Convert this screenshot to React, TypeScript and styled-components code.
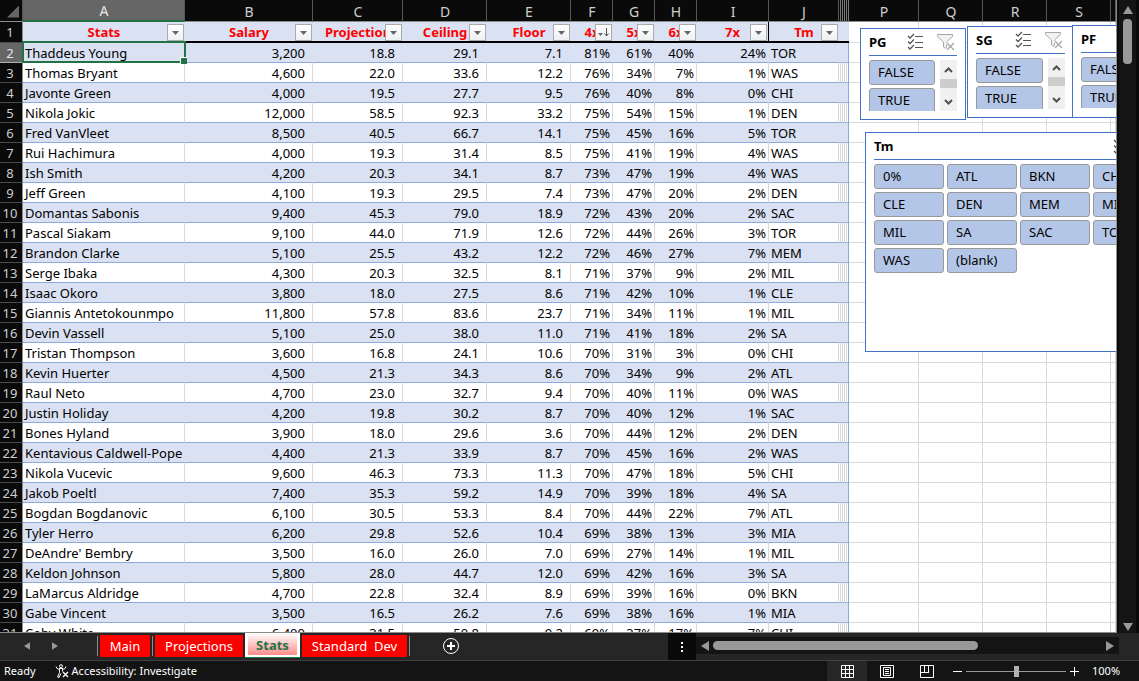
import React from "react";
import styled, { createGlobalStyle, css } from "styled-components";

const GlobalStyle = createGlobalStyle`
  * { box-sizing: border-box; }
  html, body { margin: 0; }
  body { background: #141414; font-family: "Noto Sans", "Open Sans", sans-serif; font-size: 13px; color: #000; }
  button { font: inherit; color: inherit; margin: 0; padding: 0; border: 0; background: none; }
`;

const blue = "#8ea9db";
const band = "#d9e1f2";
const gridLine = "#d9d9d9";
const slicerBlue = "#4472c4";

type Row = [string, string, string, string, string, string, string, string, string, string];

const rows: Row[] = [
  ["Thaddeus Young", "3,200", "18.8", "29.1", "7.1", "81%", "61%", "40%", "24%", "TOR"],
  ["Thomas Bryant", "4,600", "22.0", "33.6", "12.2", "76%", "34%", "7%", "1%", "WAS"],
  ["Javonte Green", "4,000", "19.5", "27.7", "9.5", "76%", "40%", "8%", "0%", "CHI"],
  ["Nikola Jokic", "12,000", "58.5", "92.3", "33.2", "75%", "54%", "15%", "1%", "DEN"],
  ["Fred VanVleet", "8,500", "40.5", "66.7", "14.1", "75%", "45%", "16%", "5%", "TOR"],
  ["Rui Hachimura", "4,000", "19.3", "31.4", "8.5", "75%", "41%", "19%", "4%", "WAS"],
  ["Ish Smith", "4,200", "20.3", "34.1", "8.7", "73%", "47%", "19%", "4%", "WAS"],
  ["Jeff Green", "4,100", "19.3", "29.5", "7.4", "73%", "47%", "20%", "2%", "DEN"],
  ["Domantas Sabonis", "9,400", "45.3", "79.0", "18.9", "72%", "43%", "20%", "2%", "SAC"],
  ["Pascal Siakam", "9,100", "44.0", "71.9", "12.6", "72%", "44%", "26%", "3%", "TOR"],
  ["Brandon Clarke", "5,100", "25.5", "43.2", "12.2", "72%", "46%", "27%", "7%", "MEM"],
  ["Serge Ibaka", "4,300", "20.3", "32.5", "8.1", "71%", "37%", "9%", "2%", "MIL"],
  ["Isaac Okoro", "3,800", "18.0", "27.5", "8.6", "71%", "42%", "10%", "1%", "CLE"],
  ["Giannis Antetokounmpo", "11,800", "57.8", "83.6", "23.7", "71%", "34%", "11%", "1%", "MIL"],
  ["Devin Vassell", "5,100", "25.0", "38.0", "11.0", "71%", "41%", "18%", "2%", "SA"],
  ["Tristan Thompson", "3,600", "16.8", "24.1", "10.6", "70%", "31%", "3%", "0%", "CHI"],
  ["Kevin Huerter", "4,500", "21.3", "34.3", "8.6", "70%", "34%", "9%", "2%", "ATL"],
  ["Raul Neto", "4,700", "23.0", "32.7", "9.4", "70%", "40%", "11%", "0%", "WAS"],
  ["Justin Holiday", "4,200", "19.8", "30.2", "8.7", "70%", "40%", "12%", "1%", "SAC"],
  ["Bones Hyland", "3,900", "18.0", "29.6", "3.6", "70%", "44%", "12%", "2%", "DEN"],
  ["Kentavious Caldwell-Pope", "4,400", "21.3", "33.9", "8.7", "70%", "45%", "16%", "2%", "WAS"],
  ["Nikola Vucevic", "9,600", "46.3", "73.3", "11.3", "70%", "47%", "18%", "5%", "CHI"],
  ["Jakob Poeltl", "7,400", "35.3", "59.2", "14.9", "70%", "39%", "18%", "4%", "SA"],
  ["Bogdan Bogdanovic", "6,100", "30.5", "53.3", "8.4", "70%", "44%", "22%", "7%", "ATL"],
  ["Tyler Herro", "6,200", "29.8", "52.6", "10.4", "69%", "38%", "13%", "3%", "MIA"],
  ["DeAndre' Bembry", "3,500", "16.0", "26.0", "7.0", "69%", "27%", "14%", "1%", "MIL"],
  ["Keldon Johnson", "5,800", "28.0", "44.7", "12.0", "69%", "42%", "16%", "3%", "SA"],
  ["LaMarcus Aldridge", "4,700", "22.8", "32.4", "8.9", "69%", "39%", "16%", "0%", "BKN"],
  ["Gabe Vincent", "3,500", "16.5", "26.2", "7.6", "69%", "38%", "16%", "1%", "MIA"],
  ["Coby White", "6,400", "31.5", "50.8", "9.2", "69%", "37%", "17%", "7%", "CHI"],
];

const columns = [
  { letter: "A", label: "Stats", width: 162 },
  { letter: "B", label: "Salary", width: 128 },
  { letter: "C", label: "Projection", width: 90 },
  { letter: "D", label: "Ceiling", width: 84 },
  { letter: "E", label: "Floor", width: 84 },
  { letter: "F", label: "4x", width: 42 },
  { letter: "G", label: "5x", width: 42 },
  { letter: "H", label: "6x", width: 42 },
  { letter: "I", label: "7x", width: 72 },
  { letter: "J", label: "Tm", width: 70 },
];

const emptyColumns = [
  { letter: "P", width: 70 },
  { letter: "Q", width: 64 },
  { letter: "R", width: 64 },
  { letter: "S", width: 64 },
];

const Window = styled.div`
  display: flex;
  flex-direction: column;
  height: 100vh;
  overflow: hidden;
  background: #262626;
`;

const Workspace = styled.main`
  display: flex;
  flex: 1;
  min-height: 0;
`;

const SheetArea = styled.div`
  position: relative;
  flex: 1;
  min-width: 0;
  overflow: hidden;
  background: #fff;
  border-right: 1px solid #8c8c8c;
  border-bottom: 1px solid #8c8c8c;
`;

const Sheet = styled.table`
  table-layout: fixed;
  width: 100%;
  min-width: 1100px;
  border-collapse: separate;
  border-spacing: 0;
  line-height: 18px;
`;

const Col = styled.col<{ $width?: number }>`
  ${(p) => p.$width && css`width: ${p.$width}px;`}
`;

const ColumnHead = styled.th<{ $selected?: boolean; $narrow?: boolean }>`
  height: 22px;
  padding: ${(p) => (p.$narrow ? "2px 0 0" : "2px 0 0 1px")};
  overflow: hidden;
  font-weight: 400;
  font-size: 14px;
  color: ${(p) => (p.$selected ? "#e6e6e6" : "#cfcfcf")};
  background: ${(p) => (p.$selected ? "#666" : "#0a0a0a")};
  border-right: 1px solid ${(p) => (p.$narrow ? "#777" : "#555")};
  border-bottom: ${(p) => (p.$selected ? "2px solid #217346" : "1px solid #8c8c8c")};
`;

const SelectAll = styled.button`
  display: block;
  width: 12px;
  height: 12px;
  margin-left: 6px;
  background: #666;
  clip-path: polygon(100% 0, 100% 100%, 0 100%);
`;

const RowHead = styled.th<{ $selected?: boolean }>`
  padding: 0 2px 0 0;
  font-weight: 400;
  text-align: center;
  color: ${(p) => (p.$selected ? "#e6e6e6" : "#cfcfcf")};
  background: ${(p) => (p.$selected ? "#666" : "#0a0a0a")};
  border-right: 1px solid #8c8c8c;
  border-bottom: 1px solid ${(p) => (p.$selected ? "#b0b0b0" : "#4a4a4a")};
`;

const FieldHead = styled.th<{ $divider?: boolean }>`
  height: 21px;
  padding: 0;
  background: ${band};
  border-bottom: 2px solid #000;
  ${(p) => p.$divider && css`border-right: 1px solid #000;`}
`;

const FieldInner = styled.div`
  display: grid;
  position: relative;
  align-items: center;
  height: 19px;
  font-weight: 700;
  color: #f00;
  overflow: hidden;
  white-space: nowrap;
  text-align: center;
`;

const FilterButton = styled.button`
  position: absolute;
  right: 1px;
  top: 2px;
  display: grid;
  place-items: center;
  width: 17px;
  height: 17px;
  border: 1px solid #ababab;
  background: linear-gradient(#fff, #eef0f4);
`;

const Cell = styled.td<{ $band?: boolean; $text?: boolean; $pad?: number }>`
  height: 20px;
  padding: 0 ${(p) => p.$pad ?? 2}px 0 2px;
  overflow: hidden;
  white-space: nowrap;
  text-align: ${(p) => (p.$text ? "left" : "right")};
  background: ${(p) => (p.$band ? band : "#fff")};
  border-right: 1px solid ${(p) => (p.$band ? band : gridLine)};
  border-bottom: 1px solid ${blue};
`;

const SliverCell = styled(Cell)<{ $last?: boolean }>`
  padding: 0;
  ${(p) => p.$last && css`border-right-color: ${blue};`}
`;

const BlankCell = styled.td`
  padding: 0;
  border-right: 1px solid ${gridLine};
  border-bottom: 1px solid ${gridLine};
`;

const Selection = styled.div`
  position: absolute;
  left: 22px;
  top: 41px;
  width: 164px;
  height: 22px;
  border: 2px solid #217346;
  pointer-events: none;
  &::after {
    content: "";
    position: absolute;
    right: -3px;
    bottom: -3px;
    width: 6px;
    height: 6px;
    background: #217346;
    border-left: 1px solid #fff;
    border-top: 1px solid #fff;
  }
`;

const SlicerPanel = styled.section<{ $x: number; $y: number; $w: number; $h: number }>`
  position: absolute;
  left: ${(p) => p.$x}px;
  top: ${(p) => p.$y}px;
  width: ${(p) => p.$w}px;
  height: ${(p) => p.$h}px;
  padding: 0 8px 8px;
  background: #fff;
  border: 1px solid ${slicerBlue};
`;

const SlicerHead = styled.header`
  display: flex;
  align-items: center;
  height: 27px;
  border-bottom: 1px solid ${slicerBlue};
`;

const SlicerTitle = styled.h2`
  flex: 1;
  margin: 0;
  font-size: 13px;
  line-height: 18px;
`;

const SlicerTools = styled.div`
  display: flex;
  gap: 13px;
  margin-right: 2px;
  button { display: grid; height: 18px; }
`;

const SlicerBody = styled.div`
  display: flex;
  gap: 5px;
  height: 51px;
  margin-top: 4px;
  overflow: hidden;
`;

const SlicerItems = styled.div<{ $columns: number }>`
  flex: 1;
  display: grid;
  grid-template-columns: repeat(${(p) => p.$columns}, 1fr);
  grid-auto-rows: 25px;
  gap: 3px;
`;

const TeamBody = styled.div`
  display: flex;
  margin-top: 4px;
`;

const SlicerItem = styled.button`
  padding: 0 0 2px 8px;
  text-align: left;
  line-height: 18px;
  background: #b4c6e7;
  border: 1px solid #999;
  border-radius: 3px;
`;

const MiniScroll = styled.div`
  display: flex;
  flex-direction: column;
  align-items: center;
  width: 17px;
  background: #f0f0f0;
  button { display: grid; place-items: center; width: 17px; height: 19px; }
`;

const MiniThumb = styled.div`
  width: 17px;
  height: 9px;
  margin-bottom: auto;
  background: #cdcdcd;
`;

const VerticalBar = styled.div`
  display: flex;
  flex-direction: column;
  align-items: center;
  width: 22px;
  padding: 6px 0 2px;
  background: #141414;
  border-left: 2px solid #0a0a0a;
  border-right: 3px solid #0a0a0a;
`;

const VerticalThumb = styled.div`
  width: 9px;
  height: 45px;
  margin: 5px 0 auto;
  border-radius: 4px;
  background: #999;
`;

const ArrowButton = styled.button`
  display: grid;
  place-items: center;
`;

const TabBar = styled.nav`
  display: flex;
  height: 27px;
  background: #262626;
`;

const TabNav = styled.div`
  display: flex;
  align-items: center;
  gap: 22px;
  width: 97px;
  padding: 0 0 2px 24px;
`;

const Tabs = styled.div`
  display: flex;
  align-items: flex-start;
`;

const TabDivider = styled.span`
  width: 1px;
  height: 20px;
  margin: 3px 2px 0 0;
  background: #8c8c8c;
`;

const Tab = styled.button<{ $w: number }>`
  width: ${(p) => p.$w}px;
  height: 22px;
  margin: 2px 2px 0 0;
  color: #fff;
  background: #f00;
  line-height: 18px;
  white-space: pre;
`;

const ActiveTab = styled(Tab)`
  height: 24px;
  margin: 0 2px 0 0;
  padding-top: 2px;
  font-weight: 700;
  color: #217346;
  background: linear-gradient(#fff, #ff8c8c);
  border: 3px solid #fff;
  border-width: 0 3px 2px;
  box-shadow: 0 -1px 0 #fff, 0 1px 0 #217346;
`;

const AddSheet = styled.button`
  display: grid;
  width: 18px;
  height: 18px;
  margin: 4px auto 0 30px;
`;

const Splitter = styled.div`
  display: grid;
  place-items: center;
  width: 28px;
  background: #0a0a0a;
`;

const HorizontalBar = styled.div`
  display: flex;
  align-items: center;
  width: 423px;
  height: 17px;
  margin: 4px 20px 0 0;
  padding: 0 5px;
  background: #141414;
`;

const HorizontalThumb = styled.div`
  width: 265px;
  height: 9px;
  margin: 0 auto 0 4px;
  border-radius: 5px;
  background: #999;
`;

const StatusBar = styled.footer`
  display: flex;
  align-items: stretch;
  height: 21px;
  padding: 0 19px 0 4px;
  color: #fff;
  font-size: 11px;
  line-height: 20px;
  background: #141414;
  border-top: 1px solid #404040;
`;

const Accessibility = styled.button`
  display: flex;
  align-items: center;
  gap: 3px;
  margin: 0 auto 0 19px;
`;

const ViewButton = styled.button<{ $active?: boolean }>`
  display: grid;
  place-items: center;
  width: 40px;
  background: ${(p) => (p.$active ? "#262626" : "transparent")};
`;

const ZoomControl = styled.div`
  display: flex;
  align-items: center;
  gap: 4px;
  margin-left: 6px;
  button { display: grid; }
`;

const ZoomRange = styled.input`
  appearance: none;
  width: 100px;
  height: 11px;
  margin: 0;
  background: linear-gradient(#999, #999) center / 100% 1px no-repeat;
  &::-webkit-slider-thumb {
    appearance: none;
    width: 5px;
    height: 11px;
    background: #b0b0b0;
  }
`;

const ZoomValue = styled.span`
  width: 28px;
  margin-left: 9px;
`;

const DropGlyph = () => (
  <svg width="7" height="4" viewBox="0 0 7 4"><path d="M0 0h7L3.5 4z" fill="#666" /></svg>
);

const SortedGlyph = () => (
  <svg width="13" height="9" viewBox="0 0 13 9">
    <path d="M1 5h5L3.5 8z" fill="#666" />
    <path d="M9.5 0v8M7.5 5.500l2 2.500 2-2.500" fill="none" stroke="#555" />
  </svg>
);

const MultiSelectIcon = () => (
  <svg width="17" height="17" viewBox="0 0 17 17" fill="none" stroke="#555">
    <path d="M1 3l2 2 4-4M1 8.500l2 2 4-4M1 14l2 2 4-4" strokeWidth="1.300" />
    <path d="M8 3.500h8M8 9.500h8M8 14.500h8" />
  </svg>
);

const ClearFilterIcon = () => (
  <svg width="18" height="18" viewBox="0 0 18 18" fill="none" stroke="#a6a6a6">
    <path d="M.5 1.500h15v2L9.500 9v7l-3-2V9L.5 3.500z" fill="#f2f2f2" />
    <path d="M9.500 9.500l7.500 7.500M17 9.500L9.500 17" stroke="#fff" strokeWidth="3" />
    <path d="M10 10l7 7M17 10l-7 7" strokeWidth="1.300" />
  </svg>
);

const Chevron = ({ up }: { up?: boolean }) => (
  <svg width="9" height="6" viewBox="0 0 9 6" fill="none" stroke="#505050" strokeWidth="2">
    <path d={up ? "M1 5l3.500-3.500L8 5" : "M1 1l3.500 3.500L8 1"} />
  </svg>
);

const arrowPaths = {
  up: "M0 8L5 0l5 8z",
  down: "M0 0h10L5 8z",
  left: "M8 0v10L0 5z",
  right: "M0 0v10l8-5z",
};

const Arrow = ({ dir, size = 10, label }: { dir: keyof typeof arrowPaths; size?: number; label: string }) => {
  const vertical = dir === "up" || dir === "down";
  const short = Math.round(size * 0.8);
  return (
    <ArrowButton aria-label={label}>
      <svg
        width={vertical ? size : short}
        height={vertical ? short : size}
        viewBox={vertical ? "0 0 10 8" : "0 0 8 10"}
      >
        <path d={arrowPaths[dir]} fill="#999" />
      </svg>
    </ArrowButton>
  );
};

const SlicerHeader = ({ title }: { title: string }) => (
  <SlicerHead>
    <SlicerTitle>{title}</SlicerTitle>
    <SlicerTools>
      <button aria-label="Multi-select"><MultiSelectIcon /></button>
      <button aria-label="Clear filter"><ClearFilterIcon /></button>
    </SlicerTools>
  </SlicerHead>
);

const Slicer = ({ title, x, y, w, h }: { title: string; x: number; y: number; w: number; h: number }) => (
  <SlicerPanel $x={x} $y={y} $w={w} $h={h} aria-label={title}>
    <SlicerHeader title={title} />
    <SlicerBody>
      <SlicerItems $columns={1}>
        <SlicerItem>FALSE</SlicerItem>
        <SlicerItem>TRUE</SlicerItem>
      </SlicerItems>
      <MiniScroll>
        <button aria-label="Scroll up"><Chevron up /></button>
        <MiniThumb />
        <button aria-label="Scroll down"><Chevron /></button>
      </MiniScroll>
    </SlicerBody>
  </SlicerPanel>
);

const teams = ["0%", "ATL", "BKN", "CHI", "CLE", "DEN", "MEM", "MIA", "MIL", "SA", "SAC", "TOR", "WAS", "(blank)"];
const slivers = [0, 1, 2, 3, 4];
const numberPad = [0, 7, 7, 7, 7, 2, 2, 2, 2, 2];

export default function App() {
  return (
    <Window>
      <GlobalStyle />
      <Workspace>
        <SheetArea>
          <Sheet>
            <colgroup>
              <Col $width={23} />
              {columns.map((c) => <Col key={c.letter} $width={c.width} />)}
              {slivers.map((s) => <Col key={s} $width={2} />)}
              {emptyColumns.map((c) => <Col key={c.letter} $width={c.width} />)}
              <Col />
            </colgroup>
            <thead>
              <tr>
                <ColumnHead><SelectAll aria-label="Select all" /></ColumnHead>
                {columns.map((c, i) => <ColumnHead key={c.letter} $selected={i === 0}>{c.letter}</ColumnHead>)}
                {slivers.map((s) => <ColumnHead key={s} $narrow />)}
                {emptyColumns.map((c) => <ColumnHead key={c.letter}>{c.letter}</ColumnHead>)}
                <ColumnHead />
              </tr>
              <tr>
                <RowHead>1</RowHead>
                {columns.map((c) => (
                  <FieldHead key={c.letter} $divider={c.letter === "I"}>
                    <FieldInner>
                      {c.label}
                      <FilterButton aria-label={`Filter ${c.label}`}>
                        {c.letter === "F" ? <SortedGlyph /> : <DropGlyph />}
                      </FilterButton>
                    </FieldInner>
                  </FieldHead>
                ))}
                {slivers.map((s) => <FieldHead key={s} />)}
                {emptyColumns.map((c) => <BlankCell key={c.letter} />)}
                <BlankCell />
              </tr>
            </thead>
            <tbody>
              {rows.map((row, r) => (
                <tr key={row[0]}>
                  <RowHead $selected={r === 0}>{r + 2}</RowHead>
                  {row.map((value, i) => (
                    <Cell key={i} $band={r % 2 === 0} $text={i === 0 || i === 9} $pad={numberPad[i]}>{value}</Cell>
                  ))}
                  {slivers.map((s) => <SliverCell key={s} $band={r % 2 === 0} $last={s === 4} />)}
                  {emptyColumns.map((c) => <BlankCell key={c.letter} />)}
                  <BlankCell />
                </tr>
              ))}
            </tbody>
          </Sheet>
          <Selection />
          <Slicer title="PG" x={860} y={28} w={106} h={92} />
          <Slicer title="SG" x={967} y={26} w={107} h={92} />
          <Slicer title="PF" x={1072} y={25} w={107} h={93} />
          <SlicerPanel $x={865} $y={132} $w={307} $h={220} aria-label="Tm">
            <SlicerHeader title="Tm" />
            <TeamBody>
              <SlicerItems $columns={4}>
                {teams.map((t) => <SlicerItem key={t}>{t}</SlicerItem>)}
              </SlicerItems>
            </TeamBody>
          </SlicerPanel>
        </SheetArea>
        <VerticalBar>
          <Arrow dir="up" label="Scroll up" />
          <VerticalThumb />
          <Arrow dir="down" label="Scroll down" />
        </VerticalBar>
      </Workspace>
      <TabBar>
        <TabNav>
          <Arrow dir="left" size={8} label="Previous sheet" />
          <Arrow dir="right" size={8} label="Next sheet" />
        </TabNav>
        <Tabs>
          <TabDivider />
          <Tab $w={50}>Main</Tab>
          <TabDivider />
          <Tab $w={88}>Projections</Tab>
          <ActiveTab $w={55}>Stats</ActiveTab>
          <Tab $w={105}>{"Standard  Dev"}</Tab>
          <TabDivider />
        </Tabs>
        <AddSheet aria-label="New sheet">
          <svg width="18" height="18" viewBox="0 0 18 18" fill="none" stroke="#fff">
            <circle cx="9" cy="9" r="7.500" />
            <path d="M9 5v8M5 9h8" strokeWidth="2" />
          </svg>
        </AddSheet>
        <Splitter>
          <svg width="2" height="10" viewBox="0 0 2 10" fill="#fff">
            <path d="M0 0h2v2H0zM0 4h2v2H0zM0 8h2v2H0z" />
          </svg>
        </Splitter>
        <HorizontalBar>
          <Arrow dir="left" label="Scroll left" />
          <HorizontalThumb />
          <Arrow dir="right" label="Scroll right" />
        </HorizontalBar>
      </TabBar>
      <StatusBar>
        <span>Ready</span>
        <Accessibility>
          <svg width="14" height="14" viewBox="0 0 14 14" fill="none" stroke="#fff">
            <circle cx="6" cy="2.200" r="1.500" />
            <path d="M1 2.500l1 2 2.500 1v3L2.500 13l1.500.5L6 9.500M11 2.500l-1 2-2.500 1v2M4 4.500h4" />
            <path d="M8 8l5 5M13 8l-5 5" strokeWidth="1.300" />
          </svg>
          Accessibility: Investigate
        </Accessibility>
        <ViewButton $active aria-label="Normal view">
          <svg width="13" height="13" viewBox="0 0 13 13" fill="none" stroke="#fff">
            <path d="M.5.5h12v12H.5zM4.500 0v13M8.500 0v13M0 4.500h13M0 8.500h13" />
          </svg>
        </ViewButton>
        <ViewButton aria-label="Page layout">
          <svg width="14" height="13" viewBox="0 0 14 13" fill="none" stroke="#fff">
            <path d="M.5.5h13v12H.5zM3.500 2.500h7v8h-7zM5 4.500h4M5 6.500h4M5 8.500h4" />
          </svg>
        </ViewButton>
        <ViewButton aria-label="Page break preview">
          <svg width="14" height="13" viewBox="0 0 14 13" fill="none" stroke="#fff">
            <path d="M.5.5h13v12H.5zM4.500 0v7.500M8.500 0v7.500M0 7.500h9" />
          </svg>
        </ViewButton>
        <ZoomControl>
          <button aria-label="Zoom out">
            <svg width="9" height="9" viewBox="0 0 9 9" stroke="#fff"><path d="M0 4.500h9" /></svg>
          </button>
          <ZoomRange type="range" min={0} max={100} defaultValue={50} aria-label="Zoom" />
          <button aria-label="Zoom in">
            <svg width="9" height="9" viewBox="0 0 9 9" stroke="#fff"><path d="M0 4.500h9M4.500 0v9" /></svg>
          </button>
          <ZoomValue>100%</ZoomValue>
        </ZoomControl>
      </StatusBar>
    </Window>
  );
}
